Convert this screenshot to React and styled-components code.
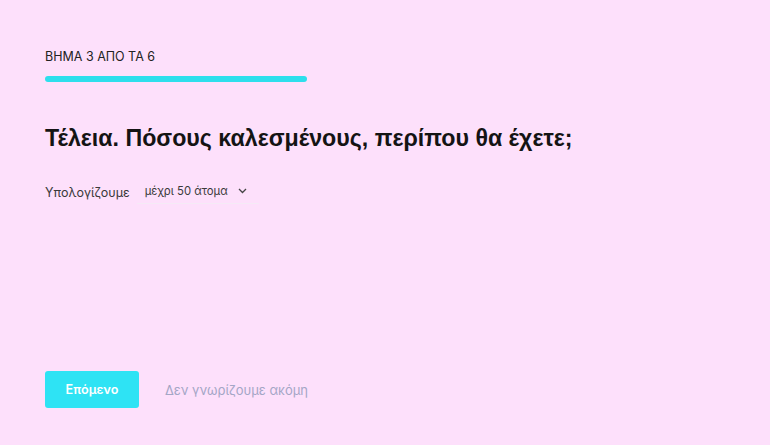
import React, { useState } from "react";
import styled, { createGlobalStyle } from "styled-components";

const GlobalStyle = createGlobalStyle`
  html, body {
    margin: 0;
    padding: 0;
    background: #fde0fb;
  }
  body {
    font-family: "Inter", "Liberation Sans", sans-serif;
  }
`;

const Page = styled.div`
  min-height: 445px;
  box-sizing: border-box;
  padding: 49px 45px 0;
  display: flex;
  flex-direction: column;
`;

const StepLabel = styled.div`
  font-size: 12.5px;
  color: #222;
  line-height: 16px;
`;

const Track = styled.div`
  margin-top: 11px;
  width: 262px;
  height: 6px;
  border-radius: 3px;
  background: #2ddfec;
`;

const Title = styled.h1`
  margin: 42px 0 0;
  font-family: "Liberation Sans", Arial, sans-serif;
  font-weight: bold;
  font-size: 23.2px;
  line-height: 28px;
  color: #141414;
`;

const EstimateRow = styled.div`
  margin-top: 28px;
  display: flex;
  align-items: center;
  gap: 7px;
`;

const Label = styled.span`
  font-size: 12.5px;
  color: #3a3a3a;
`;

const Select = styled.button`
  display: flex;
  align-items: center;
  gap: 10px;
  padding: 4px 12px 5px 8px;
  border: 0;
  border-bottom: 1px solid #f5eaf6;
  background: transparent;
  font-family: inherit;
  font-size: 11.3px;
  color: #3a3a3a;
  cursor: pointer;
`;

const Spacer = styled.div`
  flex: 1;
`;

const Actions = styled.div`
  display: flex;
  align-items: center;
  gap: 26px;
  margin-bottom: 37px;
`;

const NextButton = styled.button`
  width: 94px;
  height: 37px;
  border: 0;
  border-radius: 3px;
  background: #2ee3f4;
  color: #fff;
  font-family: inherit;
  font-weight: 600;
  font-size: 12.6px;
  cursor: pointer;
`;

const SkipLink = styled.a`
  font-size: 13px;
  color: #a4a6c6;
  text-decoration: none;
  cursor: pointer;
`;

export default function App() {
  const [guests] = useState("μέχρι 50 άτομα");

  return (
    <>
      <GlobalStyle />
      <Page>
        <StepLabel>ΒΗΜΑ 3 ΑΠΟ ΤΑ 6</StepLabel>
        <Track />
        <Title>Τέλεια. Πόσους καλεσμένους, περίπου θα έχετε;</Title>
        <EstimateRow>
          <Label>Υπολογίζουμε</Label>
          <Select>
            {guests}
            <svg width="9" height="6" viewBox="0 0 9 6" fill="none">
              <path d="M1 1l3.5 3.5L8 1" stroke="#444" strokeWidth="1.3" />
            </svg>
          </Select>
        </EstimateRow>
        <Spacer />
        <Actions>
          <NextButton>Επόμενο</NextButton>
          <SkipLink>Δεν γνωρίζουμε ακόμη</SkipLink>
        </Actions>
      </Page>
    </>
  );
}
